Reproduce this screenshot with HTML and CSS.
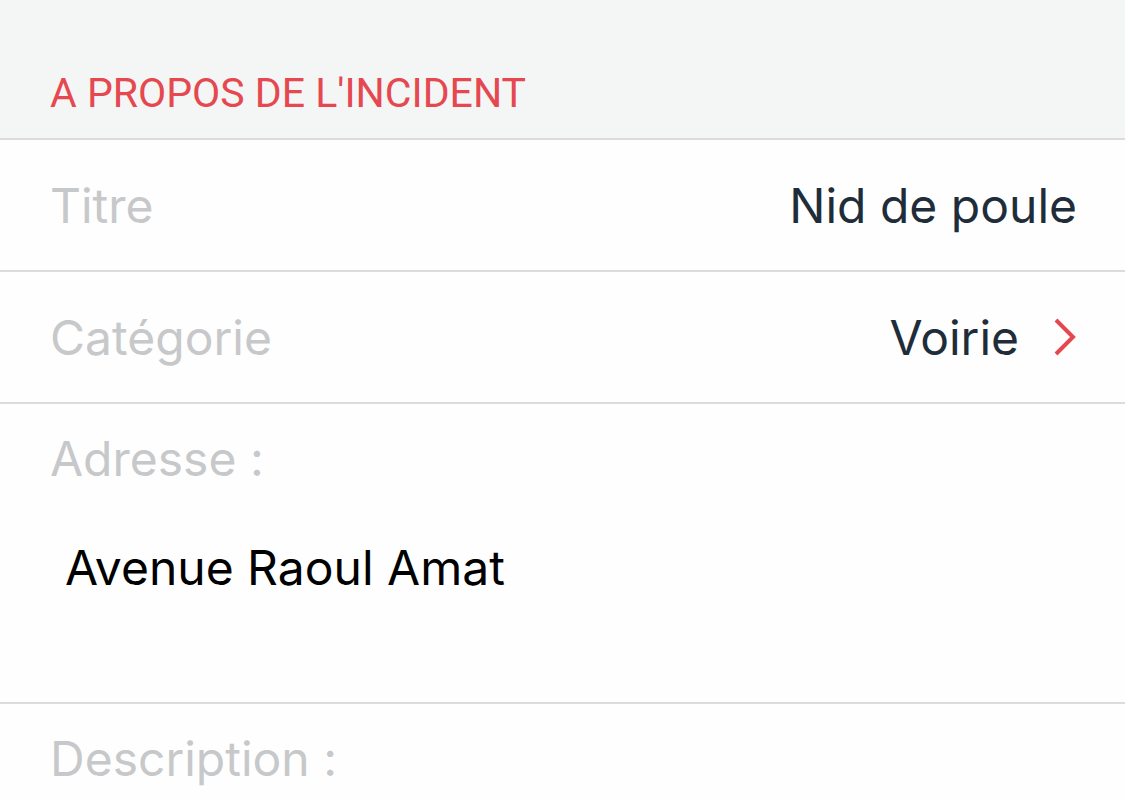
FILE: index.html
```html
<!DOCTYPE html>
<html lang="fr">
<head>
    <meta charset="UTF-8">
    <meta name="viewport" content="width=device-width, initial-scale=1.0">
    <title>Incident</title>
    <link rel="stylesheet" href="styles.css">
</head>
<body>
    <div class="section-header">
        <h2>A PROPOS DE L'INCIDENT</h2>
    </div>
    <div class="row">
        <span class="label">Titre</span>
        <span class="value">Nid de poule</span>
    </div>
    <div class="row">
        <span class="label">Catégorie</span>
        <span class="value">Voirie</span>
        <svg class="chevron" width="24" height="40" viewBox="0 0 24 40">
            <path d="M3 3 L20 20 L3 37" fill="none" stroke="#e5484f" stroke-width="4"/>
        </svg>
    </div>
    <div class="block address">
        <div class="label">Adresse :</div>
        <div class="address-text">Avenue Raoul Amat</div>
    </div>
    <div class="block">
        <div class="label">Description :</div>
    </div>
</body>
</html>
```

FILE: styles.css
```css
body {
    margin: 0;
    padding: 0;
    background-color: #fefefe;
    font-family: Inter, Roboto, 'Liberation Sans', sans-serif;
}
.section-header {
    background-color: #f4f5f5;
    height: 140px;
    border-bottom: 2px solid #dcdcdc;
    box-sizing: border-box;
    padding: 0 50px;
    display: flex;
    align-items: flex-end;
}
.section-header h2 {
    font-family: Roboto, 'Liberation Sans', sans-serif;
    font-weight: 400;
    font-size: 41px;
    color: #e5484f;
    margin: 0 0 22px 0;
    line-height: 46px;
}
.row {
    display: flex;
    align-items: center;
    height: 132px;
    padding: 0 48px 0 50px;
    border-bottom: 2px solid #dcdcdc;
    box-sizing: border-box;
}
.label {
    color: #c7c8ca;
    font-size: 48px;
    flex: 1;
}
.value {
    color: #1f2d3a;
    font-size: 48px;
}
.chevron {
    margin-left: 34px;
}
.block {
    padding: 26px 50px 0 50px;
}
.block .label {
    line-height: 58px;
}
.address {
    height: 300px;
    box-sizing: border-box;
    border-bottom: 2px solid #dcdcdc;
}
.address-text {
    color: #000;
    font-size: 48px;
    margin: 50px 0 0 15px;
}
```
